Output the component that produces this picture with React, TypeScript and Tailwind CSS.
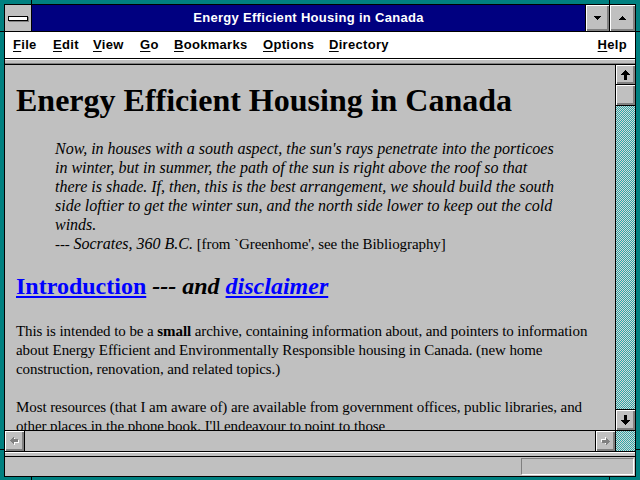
import React from 'react';

const sans = "font-['Liberation_Sans',Arial,sans-serif]";
const serif = "font-['Liberation_Serif','Times_New_Roman',serif]";
const bevel = 'bg-[#c0c0c0] shadow-[inset_1px_1px_0_#ffffff,inset_-2px_-2px_0_#808080]';
const checker =
  'bg-[image:repeating-conic-gradient(#2aa8a8_0_25%,#d8d8d8_0_50%)] bg-[length:2px_2px]';
const body = 'text-[15px] tracking-[-0.08px] leading-[19px]';

const ArrowUp = ({ className = '' }: { className?: string }) => (
  <svg width="9" height="10" viewBox="0 0 9 10" shapeRendering="crispEdges" className={className}>
    <path d="M4 0h1v1h1v1h1v1h1v1h1v1H6v5H3V5H0V4h1V3h1V2h1V1h1z" fill="#000" />
  </svg>
);

const DimArrowLeft = ({ className = '' }: { className?: string }) => (
  <svg width="9" height="8" viewBox="0 0 9 8" shapeRendering="crispEdges" className={className}>
    <path
      d="M3 0h1v2h4v3H4v2H3V6H2V5H1V4H0V3h1V2h1V1h1z"
      fill="#ffffff"
      transform="translate(1 1)"
    />
    <path d="M3 0h1v2h4v3H4v2H3V6H2V5H1V4H0V3h1V2h1V1h1z" fill="#808080" />
  </svg>
);

const Tri = ({ className = '' }: { className?: string }) => (
  <svg width="7" height="4" viewBox="0 0 7 4" shapeRendering="crispEdges" className={className}>
    <path d="M0 0h7v1H6v1H5v1H4v1H3V3H2V2H1V1H0z" fill="#000" />
  </svg>
);

const menus = [
  { label: 'File', w: 'w-[40px]' },
  { label: 'Edit', w: 'w-[40px]' },
  { label: 'View', w: 'w-[47px]' },
  { label: 'Go', w: 'w-[34px]' },
  { label: 'Bookmarks', w: 'w-[89px]' },
  { label: 'Options', w: 'w-[66px]' },
  { label: 'Directory', w: 'w-[80px]' },
];

const quote = [
  "Now, in houses with a south aspect, the sun's rays penetrate into the porticoes",
  'in winter, but in summer, the path of the sun is right above the roof so that',
  'there is shade. If, then, this is the best arrangement, we should build the south',
  'side loftier to get the winter sun, and the north side lower to keep out the cold',
  'winds.',
];

function MenuLabel({ text }: { text: string }) {
  return (
    <span>
      <span className="underline underline-offset-[2px]">{text[0]}</span>
      {text.slice(1)}
    </span>
  );
}

export default function App() {
  return (
    <div className="relative w-[640px] h-[480px] bg-[#008080] pt-[4px] px-[4px] pb-[3px]">
      {/* resize corner ticks in the frame */}
      <span className="absolute left-[31px] top-0 w-px h-[4px] bg-black" />
      <span className="absolute left-[609px] top-0 w-px h-[4px] bg-black" />
      <span className="absolute left-[31px] bottom-0 w-px h-[3px] bg-black" />
      <span className="absolute left-[609px] bottom-0 w-px h-[3px] bg-black" />
      <span className="absolute left-0 top-[31px] w-[4px] h-px bg-black" />
      <span className="absolute left-0 top-[449px] w-[4px] h-px bg-black" />
      <span className="absolute right-0 top-[31px] w-[4px] h-px bg-black" />
      <span className="absolute right-0 top-[449px] w-[4px] h-px bg-black" />

      <div className="flex flex-col h-full border border-black bg-[#c0c0c0]">
        {/* title bar */}
        <div className="flex h-[27px] border-b border-black">
          <div className="w-[27px] border-r border-black bg-[#c0c0c0] flex items-center justify-center">
            <div className="w-[20px] h-[5px] bg-white border border-black shadow-[1px_1px_0_#808080]" />
          </div>
          <div
            className={`flex-1 bg-[#000080] text-white font-bold text-[13px] tracking-[0.3px] flex items-center justify-center ${sans}`}
          >
            Energy Efficient Housing in Canada
          </div>
          <div className={`w-[24px] border-l border-black flex items-center justify-center ${bevel}`}>
            <Tri />
          </div>
          <div className={`w-[26px] border-l border-black flex items-center justify-center ${bevel}`}>
            <Tri className="rotate-180" />
          </div>
        </div>

        {/* menu bar */}
        <div
          className={`flex items-center h-[27px] border-b border-black bg-white pl-[8px] pr-[8px] text-[13px] font-bold tracking-[0.3px] text-black ${sans}`}
        >
          {menus.map((m) => (
            <div key={m.label} className={m.w}>
              <MenuLabel text={m.label} />
            </div>
          ))}
          <div className="ml-auto">
            <MenuLabel text="Help" />
          </div>
        </div>

        {/* frame ridge */}
        <div className="h-[6px] bg-[#c0c0c0] border-t border-white border-b border-b-black shadow-[inset_0_-1px_0_#808080]" />

        {/* document + vertical scrollbar */}
        <div className="flex h-[365px]">
          <div className={`flex-1 overflow-hidden bg-[#c0c0c0] pl-[11px] text-black ${serif}`}>
            <h1 className="mt-[17px] text-[32px] leading-[36px] font-bold whitespace-nowrap">
              Energy Efficient Housing in Canada
            </h1>
            <blockquote className="mt-[21px] ml-[39px] text-[16px] leading-[19px] whitespace-nowrap">
              {quote.map((l) => (
                <div key={l} className="italic">
                  {l}
                </div>
              ))}
              <div>
                <span className={body}>--- </span>
                <i>Socrates, 360 B.C.</i>
                <span className={body}> [from `Greenhome', see the Bibliography]</span>
              </div>
            </blockquote>
            <h2 className="mt-[18px] text-[24px] leading-[28px] font-bold whitespace-nowrap">
              <span className="text-[#0000ff] underline">Introduction</span>
              <i> --- and </i>
              <i className="text-[#0000ff] underline">disclaimer</i>
            </h2>
            <p className={`mt-[22px] whitespace-nowrap ${body}`}>
              This is intended to be a <b>small</b> archive, containing information about, and pointers to
              information
              <br />
              about Energy Efficient and Environmentally Responsible housing in Canada. (new home
              <br />
              construction, renovation, and related topics.)
            </p>
            <p className={`mt-[19px] whitespace-nowrap ${body}`}>
              Most resources (that I am aware of) are available from government offices, public libraries, and
              <br />
              other places in the phone book. I'll endeavour to point to those
            </p>
          </div>

          <div className="w-[20px] border-l border-black flex flex-col">
            <div className={`h-[20px] border-b border-black flex items-center justify-center ${bevel}`}>
              <ArrowUp />
            </div>
            <div className={`h-[21px] border-b border-black ${bevel}`} />
            <div className={`flex-1 ${checker}`} />
            <div className={`h-[21px] border-t border-black flex items-center justify-center ${bevel}`}>
              <ArrowUp className="rotate-180" />
            </div>
          </div>
        </div>

        {/* horizontal scrollbar */}
        <div className="flex h-[21px] border-t border-black">
          <div className={`w-[20px] border-r border-black flex items-center justify-center ${bevel}`}>
            <DimArrowLeft />
          </div>
          <div className="flex-1 bg-[#c0c0c0]" />
          <div className={`w-[20px] border-l border-black flex items-center justify-center ${bevel}`}>
            <DimArrowLeft className="rotate-180" />
          </div>
          <div className={`w-[20px] border-l border-black ${checker}`} />
        </div>

        {/* separator */}
        <div className="h-[6px] border-y border-black bg-[#c0c0c0] shadow-[inset_0_1px_0_#ffffff]" />

        {/* status bar */}
        <div className="h-[19px] flex items-center justify-end pr-[1px] bg-[#c0c0c0]">
          <div className="w-[113px] h-[17px] border border-t-[#808080] border-l-[#808080] border-b-white border-r-white" />
        </div>
      </div>
    </div>
  );
}
